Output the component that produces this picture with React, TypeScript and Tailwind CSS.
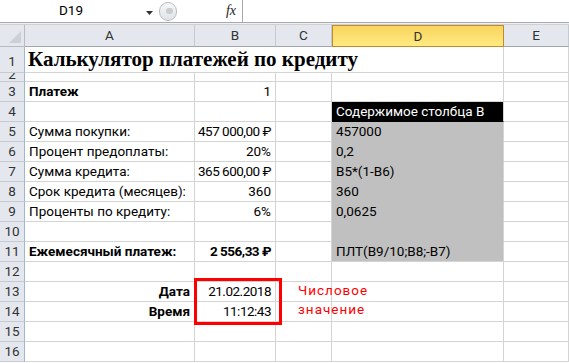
import React from "react";

type Cell = { t?: string; b?: boolean; r?: boolean; n?: boolean; bg?: "black" | "gray" };
type Row = { n: number; a?: Cell; b?: Cell; c?: Cell; d?: Cell; e?: Cell };

const rows: Row[] = [
  { n: 3, a: { t: "Платеж", b: true }, b: { t: "1", r: true } },
  { n: 4, d: { t: "Содержимое столбца В", bg: "black" } },
  { n: 5, a: { t: "Сумма покупки:" }, b: { t: "457 000,00 ₽", r: true, n: true }, d: { t: "457000", bg: "gray" } },
  { n: 6, a: { t: "Процент предоплаты:" }, b: { t: "20%", r: true }, d: { t: "0,2", bg: "gray" } },
  { n: 7, a: { t: "Сумма кредита:" }, b: { t: "365 600,00 ₽", r: true, n: true }, d: { t: "B5*(1-B6)", bg: "gray" } },
  { n: 8, a: { t: "Срок кредита (месяцев):" }, b: { t: "360", r: true }, d: { t: "360", bg: "gray" } },
  { n: 9, a: { t: "Проценты по кредиту:" }, b: { t: "6%", r: true }, d: { t: "0,0625", bg: "gray" } },
  { n: 10, d: { t: "", bg: "gray" } },
  { n: 11, a: { t: "Ежемесячный платеж:", b: true }, b: { t: "2 556,33 ₽", r: true, b: true, n: true }, d: { t: "ПЛТ(B9/10;B8;-B7)", bg: "gray" } },
  { n: 12 },
  { n: 13, a: { t: "Дата", b: true, r: true }, b: { t: "21.02.2018", r: true, n: true } },
  { n: 14, a: { t: "Время", b: true, r: true }, b: { t: "11:12:43", r: true, n: true } },
  { n: 15 },
  { n: 16 },
];

function DataCell({ c, lastGray }: { c?: Cell; lastGray?: boolean }) {
  const bg =
    c?.bg === "black"
      ? "bg-black text-white border-r-[#d4d4d4] border-b-black"
      : c?.bg === "gray"
      ? lastGray
        ? "bg-[#c0c0c0] border-b-[#d4d4d4] border-r-[#d4d4d4]"
        : "bg-[#c0c0c0] border-b-[#c0c0c0] border-r-[#d4d4d4]"
      : "border-[#d4d4d4]";
  return (
    <div
      className={`flex h-[20px] items-end overflow-visible whitespace-nowrap border-r border-b px-[4px] pb-[1px] leading-[18px] text-[13.5px] ${bg} ${c?.r ? "justify-end" : "justify-start"} ${c?.b ? "font-bold" : ""} ${c?.n ? "tracking-[-0.5px]" : ""}`}
    >
      {c?.t}
    </div>
  );
}

function RowHead({ n }: { n: number }) {
  return (
    <div className="flex h-[20px] items-end justify-center overflow-hidden border-r border-b border-r-[#9eb6ce] border-b-[#c5cad1] bg-[#e4e8ee] pb-[1px] text-[13.5px] leading-[18px] text-[#333]">
      {n}
    </div>
  );
}

export default function App() {
  return (
    <div className="relative h-[363px] w-[569px] overflow-hidden bg-white text-black" style={{ fontFamily: "Roboto, 'Noto Sans', sans-serif" }}>
      {/* formula bar */}
      <div className="flex h-[23px] items-center border-b border-[#a7abb0] bg-white">
        <div className="relative flex h-full w-[158px] items-center">
          <div className="w-[142px] text-center text-[13.5px] leading-none">D19</div>
          <svg width="8" height="5" viewBox="0 0 8 5" className="absolute left-[146px] top-[11px]">
            <path d="M0 0 H7 L3.5 4 Z" fill="#333" />
          </svg>
        </div>
        <div className="relative flex h-full w-[85px] items-center border-r border-[#a7abb0]">
          <div className="ml-[1px] h-[19px] w-[18px] rounded-full border border-[#b9bdc3] bg-gradient-to-b from-[#f7f7f7] to-[#e1e3e6]" />
          <div className="absolute left-[8px] top-[8px] h-[6px] w-[7px] rounded-full bg-[#c9ccd0]" />
          <span className="ml-auto mr-[6px] text-[14px] italic leading-none text-[#222]" style={{ fontFamily: "'Liberation Serif', serif" }}>
            fx
          </span>
        </div>
        <div className="flex-1" />
      </div>
      <div className="h-[2px] border-b border-[#d0d0d0] bg-[#f0f0f0]" />

      {/* grid */}
      <div className="grid grid-cols-[25px_170px_81px_56px_172px_65px]">
        {/* header row */}
        <div className="relative h-[22px] border-r border-b border-[#b7bcc3] bg-[#e4e8ee]">
          <svg width="12" height="12" viewBox="0 0 12 12" className="absolute right-[3px] bottom-[3px]">
            <path d="M12 0 L12 12 L0 12 Z" fill="#cdd1d6" />
          </svg>
        </div>
        {["A", "B", "C"].map((l) => (
          <div key={l} className="flex h-[22px] items-center justify-center border-r border-b border-r-[#c5cad1] border-b-[#9fa6ae] bg-[#e4e8ee] text-[13.5px] text-[#333]">
            {l}
          </div>
        ))}
        <div className="flex h-[22px] items-center justify-center border border-[#c28a30] bg-gradient-to-b from-[#f9d45e] to-[#ffea80] text-[13.5px] text-[#333]">
          D
        </div>
        <div className="flex h-[22px] items-center justify-center border-r border-b border-r-[#c5cad1] border-b-[#9fa6ae] bg-[#e4e8ee] text-[13.5px] text-[#333]">
          E
        </div>

        {/* row 1 */}
        <div className="flex h-[26px] items-end justify-center overflow-hidden border-r border-b border-r-[#9eb6ce] border-b-[#c5cad1] bg-[#e4e8ee] pb-[2px] text-[13.5px] leading-[18px] text-[#333]">
          1
        </div>
        <div className="col-span-4 flex h-[26px] items-end border-r border-b border-[#d4d4d4] px-[3px] pb-[1px] text-[21px] font-bold leading-[24px]" style={{ fontFamily: "'Liberation Serif', serif" }}>
          Калькулятор платежей по кредиту
        </div>
        <div className="h-[26px] border-r border-b border-[#d4d4d4]" />

        {/* row 2 */}
        <div className="flex h-[9px] items-start justify-center overflow-hidden border-r border-b border-r-[#9eb6ce] border-b-[#c5cad1] bg-[#e4e8ee] text-[13.5px] leading-[4px] text-[#333]">
          <span className="-mt-[6px] block leading-[14px]">2</span>
        </div>
        {[0, 1, 2, 3, 4].map((i) => (
          <div key={i} className="h-[9px] border-r border-b border-[#d4d4d4]" />
        ))}

        {rows.map((r) => (
          <React.Fragment key={r.n}>
            <RowHead n={r.n} />
            <DataCell c={r.a} />
            <DataCell c={r.b} />
            <DataCell c={r.c} />
            <DataCell c={r.d} lastGray={r.n === 11} />
            <DataCell c={r.e} />
          </React.Fragment>
        ))}
      </div>

      {/* red highlight box */}
      <div className="absolute left-[194px] top-[278px] h-[47px] w-[88px] border-[3px] border-[#ff0000]" />

      {/* annotation */}
      <div className="absolute left-[298px] top-[281px] text-[13.5px] leading-[19px] tracking-[1px] text-[#ff0000]">
        <div>Числовое</div>
        <div>значение</div>
      </div>
    </div>
  );
}
